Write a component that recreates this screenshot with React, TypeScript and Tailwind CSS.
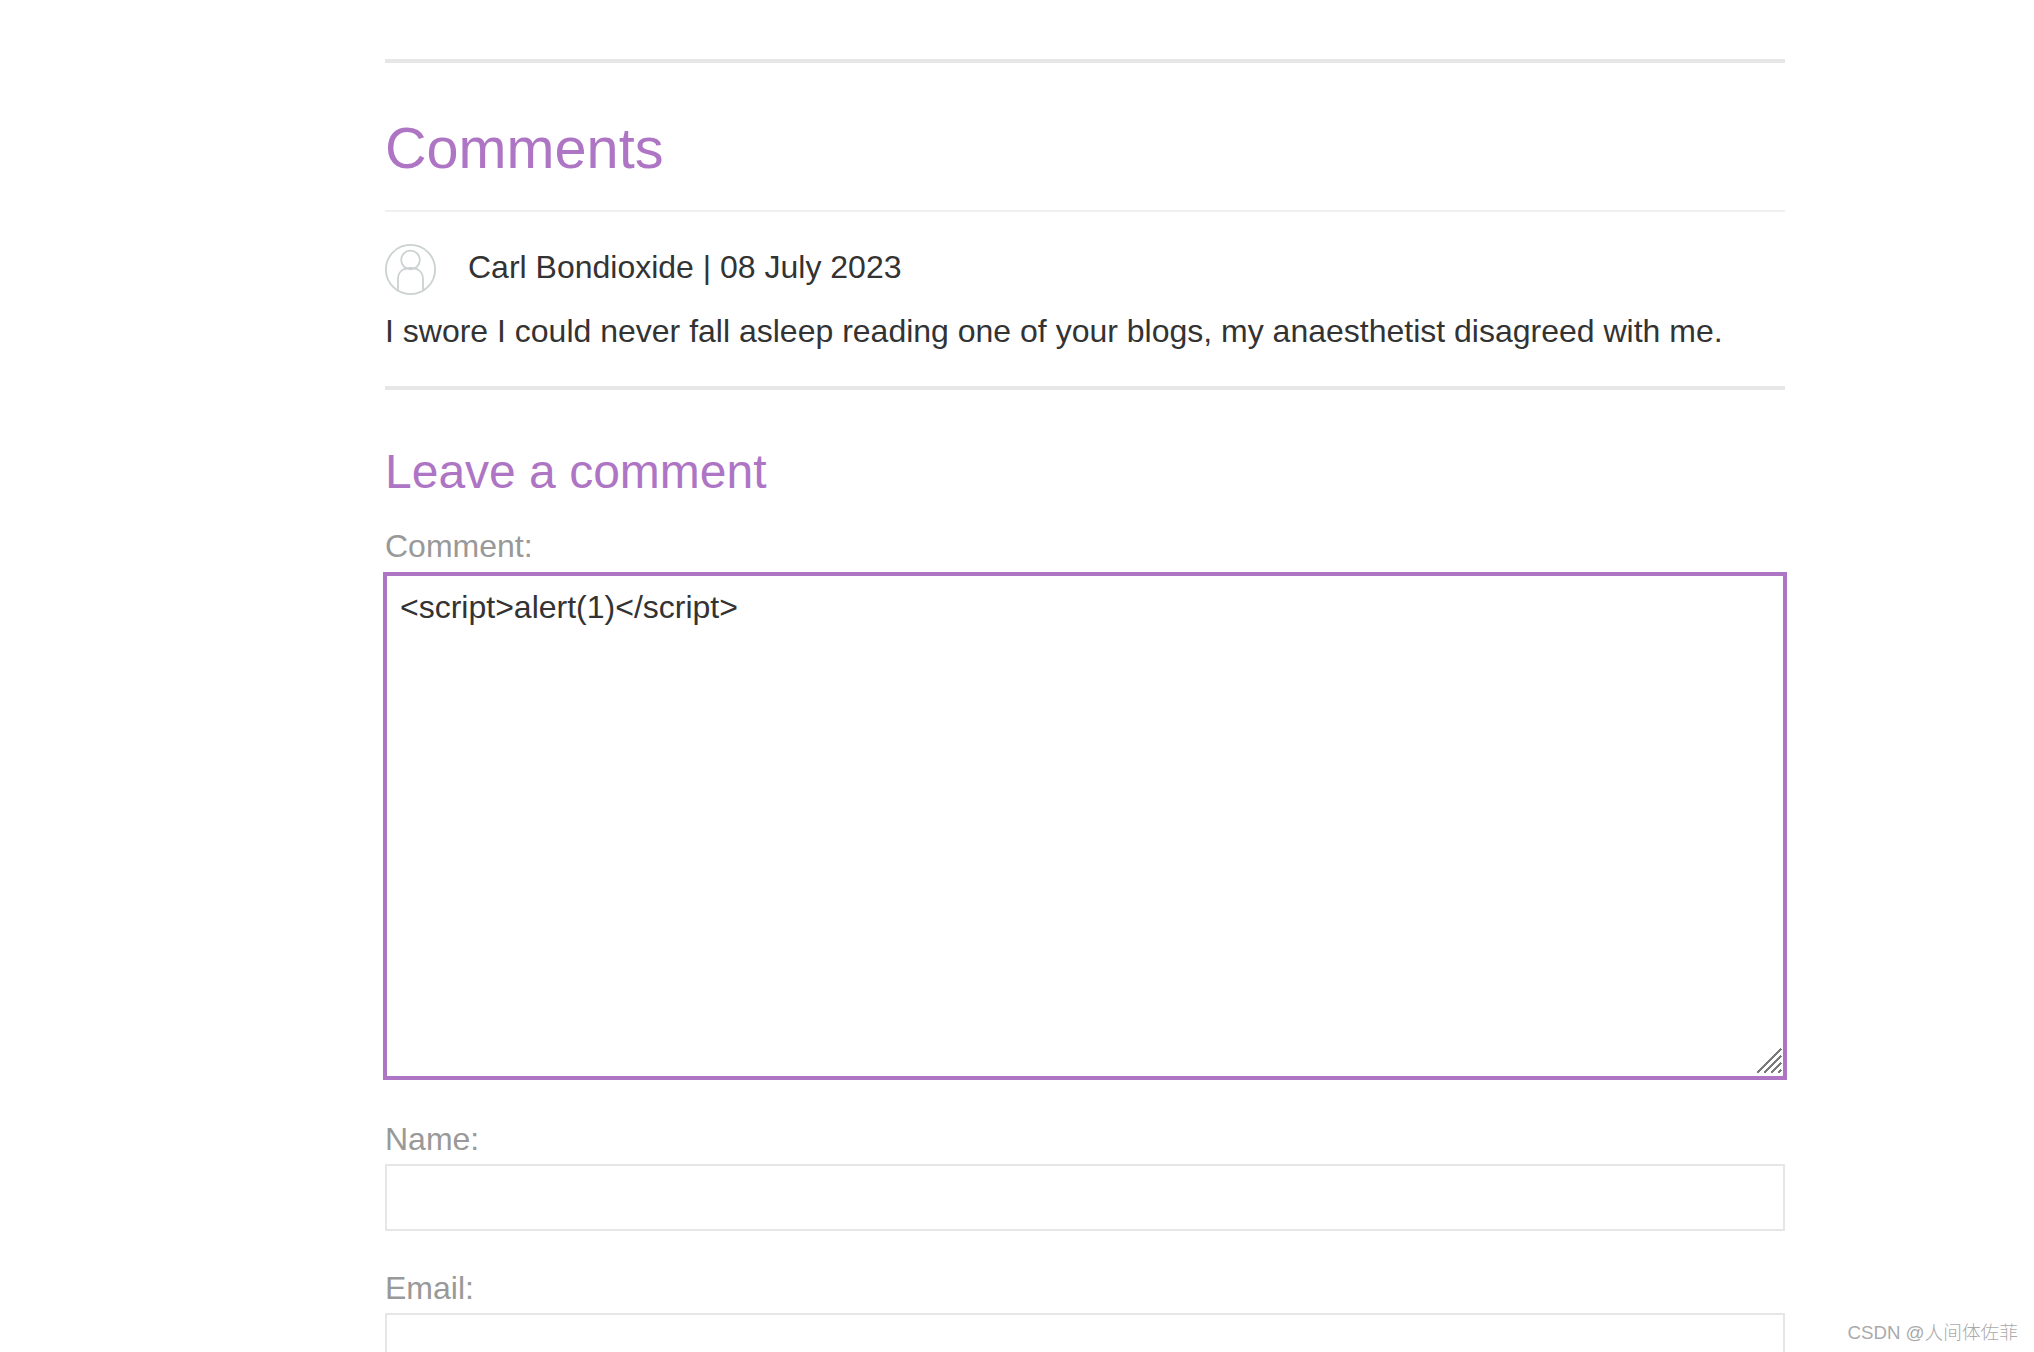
const labelClass = 'block text-[32px] leading-[38px] text-[#999999]'
const inputClass = 'block w-full border-2 border-[#e6e6e6] bg-white outline-none'

function Avatar() {
  return (
    <svg width="51" height="51" viewBox="0 0 51 51" fill="none" stroke="#ccd1d1" strokeWidth="1.8" className="shrink-0">
      <circle cx="25.5" cy="25.5" r="24.6" />
      <circle cx="25.5" cy="16" r="9.300" />
      <path d="M13 47V35c0-7 5-11 12.500-11s12.500 4 12.500 11v12" />
    </svg>
  )
}

function ResizeHandle() {
  return (
    <svg width="26" height="26" viewBox="0 0 26 26" stroke="#7a7a7a" strokeWidth="2" shapeRendering="crispEdges" className="absolute right-[5px] bottom-[6px]">
      <path d="M1 25 25 1M8 25 25 8M15 25 25 15M22 25 25 22" />
    </svg>
  )
}

export default function App() {
  return (
    <div className="relative h-[1352px] w-full overflow-hidden bg-white font-['Liberation_Sans',sans-serif] text-[#333333]">
      <div className="ml-[385px] w-[1400px] pt-[59px]">
        <div className="h-[4px] bg-[#e6e6e6]" />

        <h1 className="mt-[52px] text-[57.6px] leading-[66px] font-normal text-[#ae75c5]">Comments</h1>
        <div className="mt-[29px] h-[2px] bg-[#eef0f2]" />

        <div className="mt-[32px] flex items-start gap-[32px]">
          <Avatar />
          <p className="pt-[4px] text-[32px] leading-[38px]">Carl Bondioxide | 08 July 2023</p>
        </div>
        <p className="mt-[17px] text-[32px] leading-[38px]">
          I swore I could never fall asleep reading one of your blogs, my anaesthetist disagreed with me.
        </p>
        <div className="mt-[36px] h-[4px] bg-[#e6e6e6]" />

        <h2 className="mt-[54px] text-[48px] leading-[56px] font-normal text-[#ae75c5]">Leave a comment</h2>

        <label className={`mt-[27px] ${labelClass}`}>Comment:</label>
        <div className="relative -mx-[2px] mt-[7px] h-[508px]">
          <textarea
            readOnly
            value="<script>alert(1)</script>"
            className="block h-full w-full resize-none border-4 border-[#ae75c5] bg-white px-[13px] py-[12px] text-[32px] leading-[38px] text-[#333333] outline-none"
          />
          <ResizeHandle />
        </div>

        <label className={`mt-[40px] ${labelClass}`}>Name:</label>
        <input className={`mt-[6px] h-[67px] ${inputClass}`} />

        <label className={`mt-[38px] ${labelClass}`}>Email:</label>
        <input className={`mt-[6px] h-[67px] ${inputClass}`} />
      </div>

      <div className="absolute right-[16px] bottom-[5px] font-['Liberation_Sans','Noto_Sans_CJK_SC',sans-serif] text-[18.7px] font-light text-[#aaaaaa]">
        CSDN @人间体佐菲
      </div>
    </div>
  )
}
